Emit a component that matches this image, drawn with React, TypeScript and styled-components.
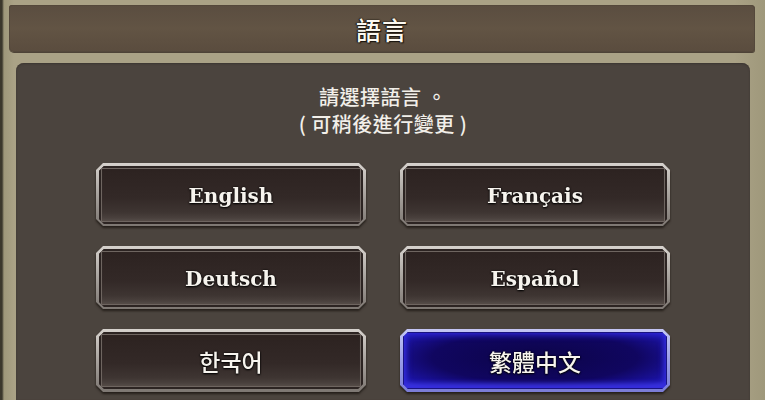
import React from 'react';
import styled, { createGlobalStyle, css } from 'styled-components';

const GlobalStyle = createGlobalStyle`
  html, body {
    margin: 0;
    padding: 0;
    background: #a59d80;
  }
  body {
    font-family: 'Noto Sans CJK TC', 'Noto Sans', sans-serif;
  }
`;

const Screen = styled.div`
  width: 765px;
  height: 400px;
  overflow: hidden;
  box-sizing: border-box;
  padding: 5px 10px 0 9px;
  display: flex;
  flex-direction: column;
  background: linear-gradient(90deg, #3b372c 0, #3b372c 2px, #9e977a 4px, #aaa286 14px, #aaa286 96%, #9f987b 100%);
`;

const TitleBar = styled.div`
  height: 47px;
  flex-shrink: 0;
  display: flex;
  align-items: center;
  justify-content: center;
  background: linear-gradient(180deg, #5a4d40 0%, #625444 50%, #5a4c3e 100%);
  border-radius: 3px 4px 3px 5px;
  box-shadow: 0 1px 0 #4e4337, inset 0 0 0 1px #54483b;
`;

const Title = styled.h1`
  margin: 0;
  font-family: 'Noto Sans CJK TC', sans-serif;
  font-weight: 500;
  font-size: 25px;
  letter-spacing: 1px;
  color: #fbf8f0;
  text-shadow: 0 0 2px #1a140e, 1px 1px 1px #1a140e, -1px 0 1px #1a140e;
`;

const Panel = styled.div`
  flex: 1;
  margin: 11px 5px 0 7px;
  border-radius: 8px 8px 0 0;
  background: #4b443e;
  box-shadow: inset 0 1px 2px #3c3631;
  padding-top: 20px;
  display: flex;
  flex-direction: column;
  align-items: center;
`;

const Prompt = styled.p`
  margin: 0;
  text-align: center;
  font-family: 'Noto Sans CJK TC', sans-serif;
  font-weight: 500;
  font-size: 20px;
  line-height: 27px;
  color: #f2efe9;
  letter-spacing: 0.5px;
`;

const Grid = styled.div`
  margin-top: 26px;
  display: grid;
  grid-template-columns: 270px 270px;
  grid-auto-rows: 63px;
  column-gap: 34px;
  row-gap: 20px;
`;

const Cell = styled.div`
  filter: drop-shadow(0 2px 1px rgba(20, 14, 10, 0.7));
`;

const chamfer = (n: number) => css`
  clip-path: polygon(
    ${n}px 0, calc(100% - ${n}px) 0, 100% ${n}px, 100% calc(100% - ${n}px),
    calc(100% - ${n}px) 100%, ${n}px 100%, 0 calc(100% - ${n}px), 0 ${n}px
  );
`;

const LangButton = styled.button<{ $active?: boolean }>`
  width: 100%;
  height: 100%;
  border: 0;
  padding: 3px;
  cursor: pointer;
  display: block;
  ${chamfer(7)}
  background: ${p =>
    p.$active
      ? 'linear-gradient(180deg, #c4c6f4 0%, #9a9ce8 50%, #7a7cd6 100%)'
      : 'linear-gradient(180deg, #d6d2cd 0%, #a8a39e 50%, #7d7772 100%)'};
`;

const Face = styled.span<{ $active?: boolean; $serif?: boolean }>`
  width: 100%;
  height: 100%;
  display: flex;
  align-items: center;
  justify-content: center;
  ${chamfer(5)}
  background: ${p =>
    p.$active
      ? 'radial-gradient(ellipse at 50% 45%, #0c0448 0%, #100660 55%, #1c14a8 85%, #3a34e8 100%)'
      : 'linear-gradient(180deg, #2c2220 0%, #332927 55%, #3e3532 80%, #564d49 100%)'};
  box-shadow: ${p =>
    p.$active
      ? 'inset 0 0 0 1px #1a1480, inset 0 0 6px 3px #3028d8, inset 0 -4px 6px #4a44f0'
      : 'inset 0 0 0 2px #2c2422, inset 0 0 0 3px #6e6560, inset 0 -3px 4px #5a514c'};
  color: #f7f4ee;
  font-family: ${p =>
    p.$serif
      ? "'DejaVu Serif', 'Liberation Serif', serif"
      : "'Noto Sans CJK TC', 'Noto Sans CJK KR', sans-serif"};
  font-weight: ${p => (p.$serif ? 700 : 500)};
  font-size: ${p => (p.$serif ? '20px' : '23px')};
  padding-top: ${p => (p.$serif ? '1px' : '0')};
  text-shadow: 0 1px 2px #000, 0 0 2px #000;
`;

interface Lang {
  label: string;
  serif?: boolean;
  lang: string;
}

const languages: Lang[] = [
  { label: 'English', serif: true, lang: 'en' },
  { label: 'Français', serif: true, lang: 'fr' },
  { label: 'Deutsch', serif: true, lang: 'de' },
  { label: 'Español', serif: true, lang: 'es' },
  { label: '한국어', lang: 'ko' },
  { label: '繁體中文', lang: 'zh-TW' },
];

const App: React.FC = () => {
  const selected = '繁體中文';
  return (
    <>
      <GlobalStyle />
      <Screen lang="zh-TW">
        <TitleBar>
          <Title>語言</Title>
        </TitleBar>
        <Panel>
          <Prompt>
            請選擇語言 。
            <br />( 可稍後進行變更 )
          </Prompt>
          <Grid>
            {languages.map(l => {
              const active = l.label === selected;
              return (
                <Cell key={l.label}>
                  <LangButton $active={active} lang={l.lang}>
                    <Face $active={active} $serif={l.serif}>
                      {l.label}
                    </Face>
                  </LangButton>
                </Cell>
              );
            })}
          </Grid>
        </Panel>
      </Screen>
    </>
  );
};

export default App;
